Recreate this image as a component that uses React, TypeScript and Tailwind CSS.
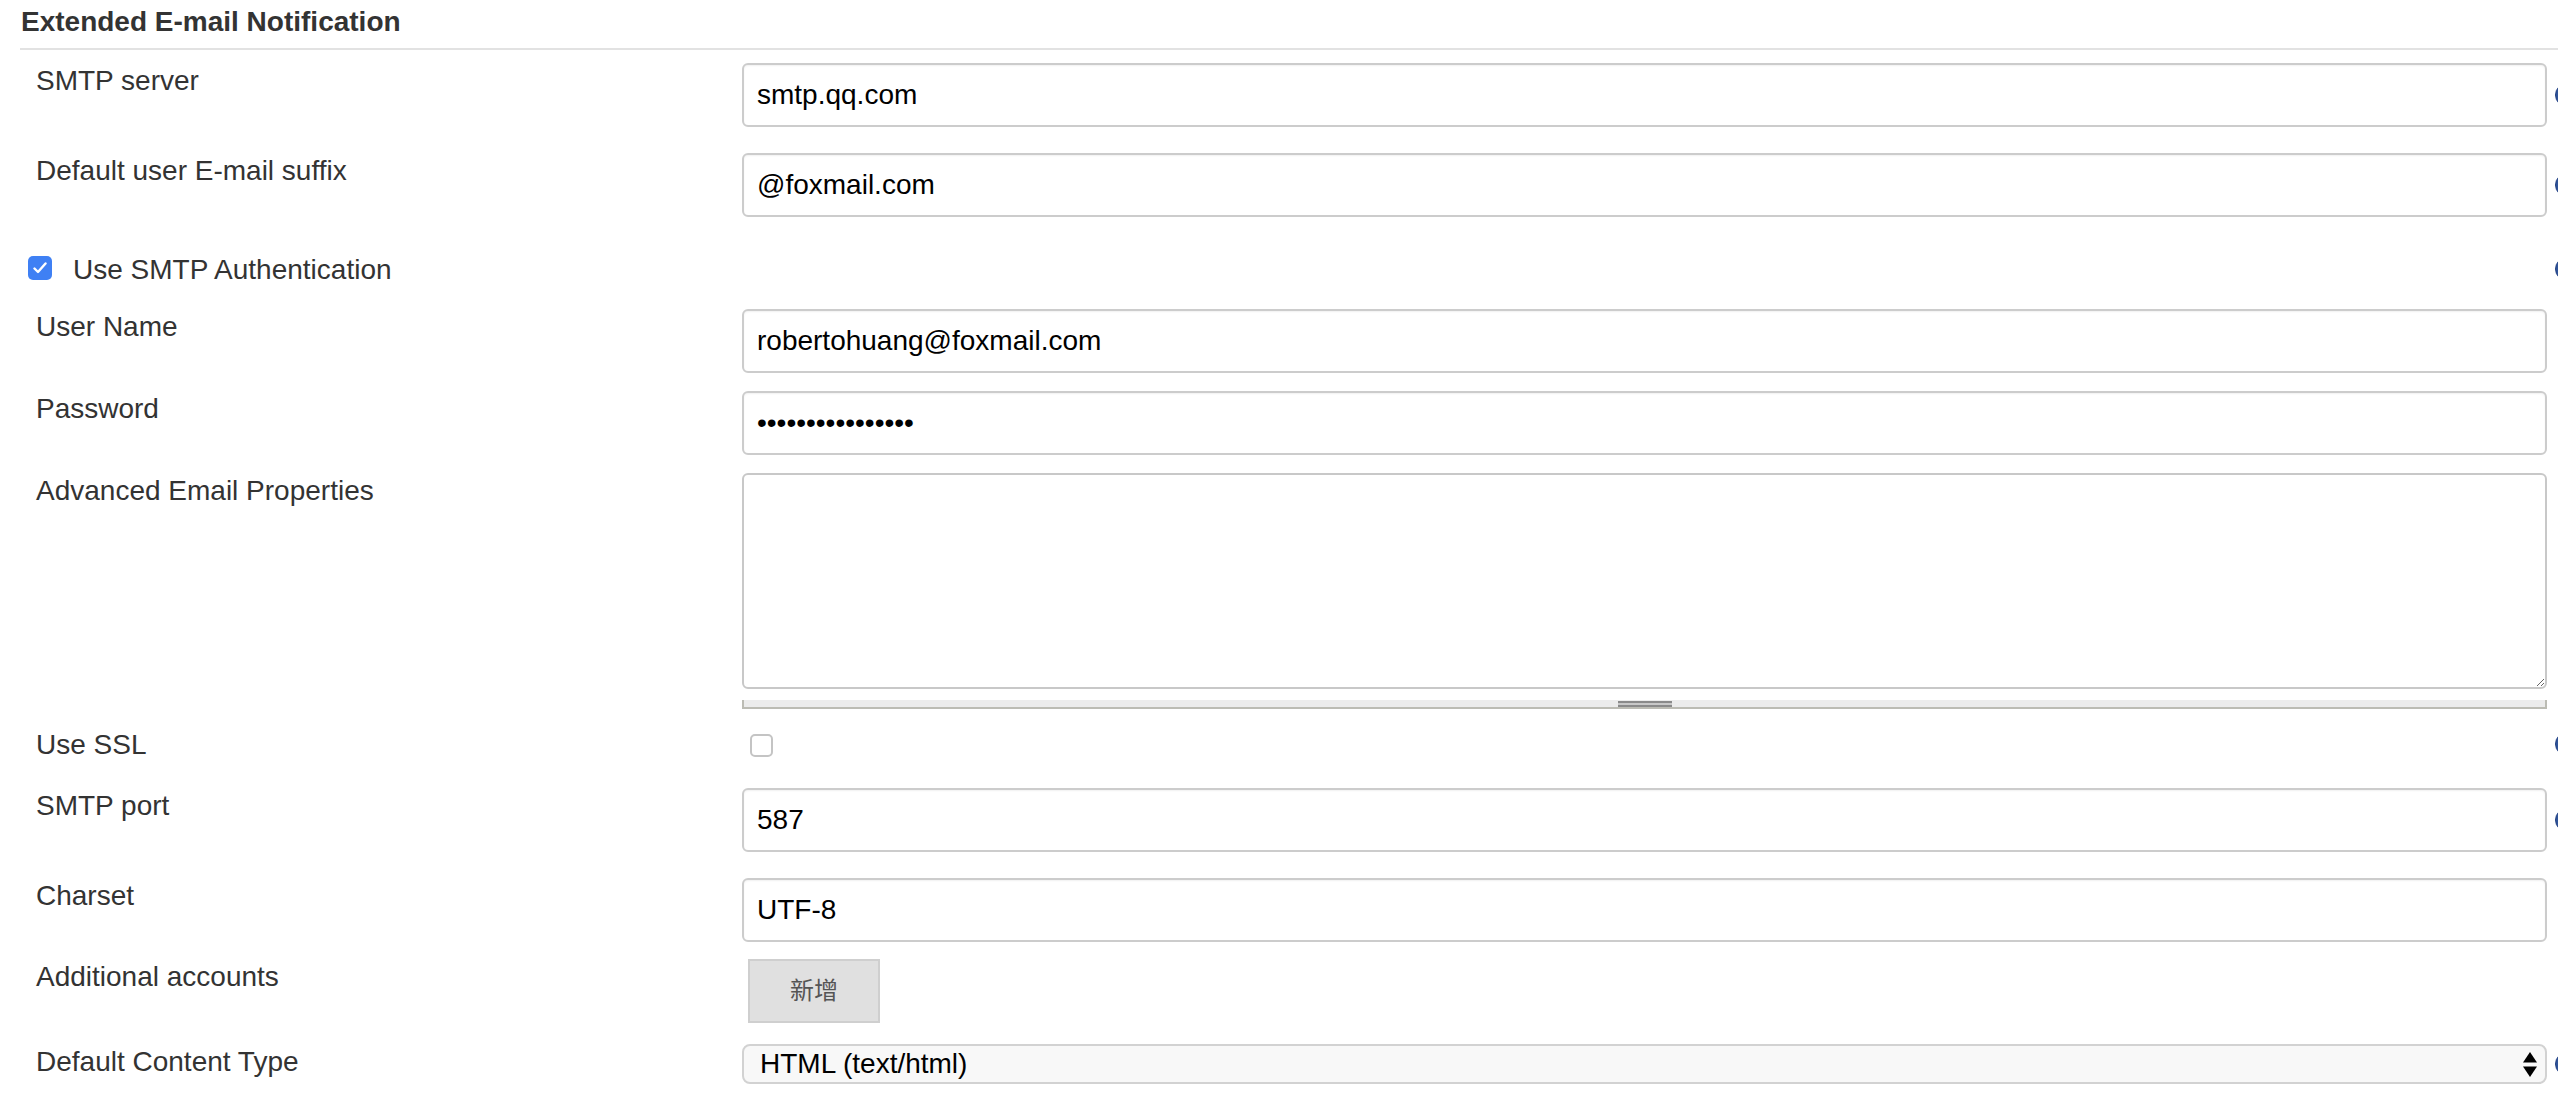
import React from 'react';

const FONT = { fontFamily: '"Liberation Sans", Arial, Helvetica, sans-serif' };

function HelpIcon() {
  return <div className="flex-none ml-[8px] w-[24px] h-[24px] rounded-full bg-[#2f5398] border border-[#234184]" />;
}

interface RowProps {
  label?: string;
  mt: string;
  help?: boolean;
  children: React.ReactNode;
}

function Row({ label, mt, help, children }: RowProps) {
  return (
    <div className={`flex items-start ${mt}`}>
      <div className="w-[742px] flex-none pl-[36px] pt-[2px] text-[28px] leading-[32px] text-[#333]">{label}</div>
      <div className="w-[1805px] flex-none">{children}</div>
      <div className="flex-none self-stretch flex items-center">{help && <HelpIcon />}</div>
    </div>
  );
}

function TextInput({ value, type = 'text' }: { value: string; type?: string }) {
  return (
    <input
      type={type}
      defaultValue={value}
      className="block w-full h-[64px] border-2 border-[#cccccc] rounded-[6px] px-[13px] text-[28px] text-black bg-white shadow-[inset_0_1px_2px_rgba(0,0,0,0.06)] outline-none"
    />
  );
}

export default function App() {
  return (
    <div className="w-full h-[1116px] overflow-hidden bg-white" style={FONT}>
      <h1 className="pt-[6px] pl-[21px] text-[28px] leading-[32px] font-bold text-[#333]">Extended E-mail Notification</h1>
      <div className="mt-[10px] ml-[20px] h-[2px] bg-[#e2e2e2]" />

      <Row label="SMTP server" mt="mt-[13px]" help>
        <TextInput value="smtp.qq.com" />
      </Row>

      <Row label="Default user E-mail suffix" mt="mt-[26px]" help>
        <TextInput value="@foxmail.com" />
      </Row>

      {/* checkbox row spans the label column */}
      <div className="flex items-center mt-[36px] h-[32px]">
        <div className="w-[2547px] flex-none flex items-start pl-[28px]">
          <div className="mt-[3px] w-[24px] h-[24px] rounded-[5px] bg-[#3f80f4] flex items-center justify-center">
            <svg width="14" height="12" viewBox="0 0 14 12" fill="none">
              <path d="M1.5 6.5 L5 10 L12.5 1.5" stroke="white" strokeWidth="2.4" strokeLinecap="round" strokeLinejoin="round" />
            </svg>
          </div>
          <span className="ml-[21px] pt-[1px] text-[28px] leading-[32px] text-[#333]">Use SMTP Authentication</span>
        </div>
        <HelpIcon />
      </div>

      <Row label="User Name" mt="mt-[24px]">
        <TextInput value="robertohuang@foxmail.com" />
      </Row>

      <Row label="Password" mt="mt-[18px]">
        <TextInput type="password" value="abcdefghijklmnop" />
      </Row>

      <Row label="Advanced Email Properties" mt="mt-[18px]">
        <textarea className="block w-full h-[216px] border-2 border-[#c8c8c8] rounded-[6px] bg-white outline-none resize-y" />
        <div className="mt-[11px] h-[9px] bg-[#ececec] border-b-2 border-l-2 border-r-2 border-[#bcbcb4] flex justify-center">
          <div className="mt-[1px] w-[54px] h-[6px] bg-[#c8c8c8] border-y-2 border-[#8a8a8a]" />
        </div>
      </Row>

      <Row label="Use SSL" mt="mt-[18px]" help>
        <div className="mt-[7px] ml-[8px] w-[23px] h-[23px] rounded-[5px] border-2 border-[#c4c4c4] bg-white" />
      </Row>

      <Row label="SMTP port" mt="mt-[27px]" help>
        <TextInput value="587" />
      </Row>

      <Row label="Charset" mt="mt-[26px]">
        <TextInput value="UTF-8" />
      </Row>

      <Row label="Additional accounts" mt="mt-[17px]">
        <button
          type="button"
          className="ml-[6px] w-[132px] h-[64px] bg-[#e0e0e0] border-2 border-[#cfcfcf] text-[24px] text-[#555]"
          style={{ fontFamily: '"Liberation Sans", "Noto Sans CJK SC", sans-serif' }}
        >
          新增
        </button>
      </Row>

      <Row label="Default Content Type" mt="mt-[21px]" help>
        <div className="h-[40px] border-2 border-[#d2d2d2] rounded-[8px] bg-[#f8f8f8] pl-[16px] pr-[8px] flex items-center justify-between text-[28px] text-black">
          <span>HTML (text/html)</span>
          <svg width="14" height="25" viewBox="0 0 14 25">
            <path d="M0 10.5 L7 0 L14 10.5 Z" fill="#000" />
            <path d="M0 14.5 L14 14.5 L7 25 Z" fill="#000" />
          </svg>
        </div>
      </Row>
    </div>
  );
}
